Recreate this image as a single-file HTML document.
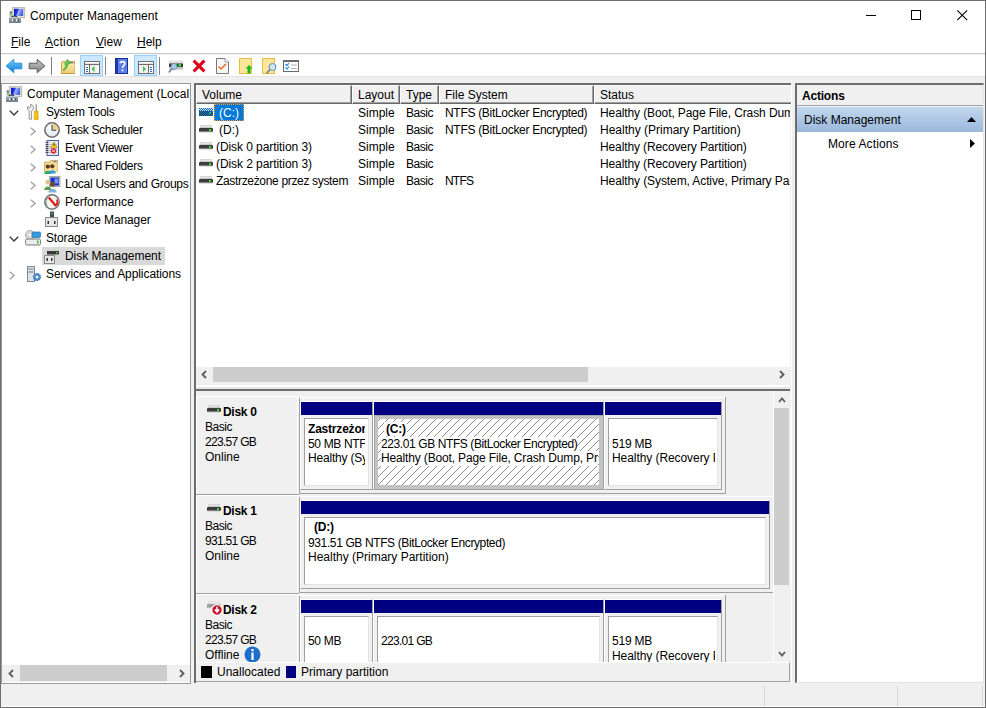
<!DOCTYPE html>
<html><head><meta charset="utf-8">
<style>
*{box-sizing:border-box;margin:0;padding:0}
html,body{width:986px;height:708px;overflow:hidden;background:#f0f0f0;font-family:"Liberation Sans",sans-serif;font-size:12px;color:#000}
.a{position:absolute}
.t{position:absolute;white-space:nowrap;line-height:14px;font-size:12px}
.b{font-weight:bold}
svg{position:absolute;overflow:visible}
.hd{position:absolute;top:85px;height:19px;background:#f0f0f0;border-top:1px solid #fff;border-left:1px solid #fff;box-shadow:inset -1px -1px 0 #a0a0a0;border-right:1px solid #696969;border-bottom:1px solid #696969}
.sb{position:absolute;background:#f0f0f0}
.th{position:absolute;background:#cdcdcd}
.bar{position:absolute;background:#000080;height:13px}
.cell{position:absolute;background:#f0f0f0;border-right:1px solid #a0a0a0;border-bottom:1px solid #a0a0a0}
.in{position:absolute;background:#fff;border-top:1px solid #a0a0a0;border-left:1px solid #a0a0a0;border-right:1px solid #e3e3e3;border-bottom:1px solid #e3e3e3;overflow:hidden}
.lab{position:absolute;left:196px;width:103px;height:98px;background:#f0f0f0;border-top:1px solid #fff;border-left:1px solid #fff;border-bottom:1px solid #a0a0a0}
.sep{position:absolute;background:#a0a0a0}
</style></head><body>
<!-- window frame -->
<div class="a" style="left:0;top:0;width:986px;height:708px;border:1px solid #6e6e6e"></div>
<div class="a" style="left:1px;top:1px;width:984px;height:76px;background:#fff"></div>
<!-- title -->
<svg style="left:9px;top:7px" width="16" height="16" viewBox="0 0 16 16">
 <defs><linearGradient id="scra" x1="0" y1="0" x2="1" y2="0.3"><stop offset="0" stop-color="#0008c8"/><stop offset="0.45" stop-color="#2a40e8"/><stop offset="0.55" stop-color="#a8b8f8"/><stop offset="1" stop-color="#4060e8"/></linearGradient>
 <linearGradient id="bsa" x1="0" y1="0" x2="0" y2="1"><stop offset="0" stop-color="#a8b4bc"/><stop offset="1" stop-color="#6e7c86"/></linearGradient></defs>
 <rect x="3.6" y="0.6" width="12" height="10" fill="#e8e6da" stroke="#c4c0ae" stroke-width="1.2"/>
 <rect x="5" y="1.8" width="9.2" height="7.2" fill="url(#scra)"/>
 <rect x="0.4" y="3.8" width="3" height="6.5" fill="#c8c8c8"/>
 <rect x="1.2" y="4.6" width="1.4" height="2" fill="#505050"/>
 <rect x="0.9" y="6.8" width="2" height="1.6" fill="#50e050"/>
 <path d="M2.5 10.5C3.5 8.5 7 8.5 8.5 10.5" stroke="#202020" stroke-width="1.2" fill="none"/>
 <rect x="0" y="10" width="12" height="6" fill="url(#bsa)"/>
 <rect x="0" y="10" width="12" height="1" fill="#c0cad0"/>
 <rect x="3" y="12.2" width="1.6" height="2" fill="#fff"/><rect x="7" y="12.2" width="1.6" height="2" fill="#fff"/>
 <rect x="4.6" y="12.2" width="1" height="2" fill="#2a3a44"/><rect x="8.6" y="12.2" width="1" height="2" fill="#2a3a44"/>
</svg>
<div class="t" style="left:30px;top:9px;letter-spacing:0.1px">Computer Management</div>
<!-- window controls -->
<div class="a" style="left:866px;top:15px;width:10px;height:1px;background:#000"></div>
<div class="a" style="left:911px;top:10px;width:10px;height:10px;border:1px solid #000"></div>
<svg style="left:957px;top:10px" width="11" height="11"><path d="M0.3 0.3L10.2 10.2M10.2 0.3L0.3 10.2" stroke="#000" stroke-width="1.1"/></svg>
<!-- menu -->
<div class="t" style="left:11px;top:35px"><u>F</u>ile</div>
<div class="t" style="left:45px;top:35px;letter-spacing:0.25px"><u>A</u>ction</div>
<div class="t" style="left:96px;top:35px"><u>V</u>iew</div>
<div class="t" style="left:137px;top:35px"><u>H</u>elp</div>
<div class="a" style="left:1px;top:53px;width:984px;height:1px;background:#c8c8c8"></div>
<!-- TOOLBAR -->

<div class="a" style="left:1px;top:54px;width:984px;height:1px;background:#f3f6fb"></div>
<div class="a" style="left:1px;top:76px;width:984px;height:1px;background:#e3e3e3"></div>
<svg style="left:5px;top:58px" width="18" height="16" viewBox="0 0 18 16">
 <defs><linearGradient id="gb" x1="0" y1="0" x2="0" y2="1"><stop offset="0" stop-color="#6fd0ff"/><stop offset="1" stop-color="#0a7ad8"/></linearGradient></defs>
 <path d="M1.2 8L8.8 1.2V5.2H16.8V10.8H8.8V14.8Z" fill="url(#gb)" stroke="#2f8fdc" stroke-width="1"/>
</svg>
<svg style="left:28px;top:58px" width="18" height="16" viewBox="0 0 18 16">
 <defs><linearGradient id="gg" x1="0" y1="0" x2="0" y2="1"><stop offset="0" stop-color="#c8c8c8"/><stop offset="1" stop-color="#808080"/></linearGradient></defs>
 <path d="M16.8 8L9.2 1.2V5.2H1.2V10.8H9.2V14.8Z" fill="url(#gg)" stroke="#5a5a5a" stroke-width="1"/>
</svg>
<div class="a" style="left:51px;top:57px;width:1px;height:18px;background:#808080"></div>
<svg style="left:61px;top:58px" width="15" height="16" viewBox="0 0 15 16">
 <defs><linearGradient id="fo" x1="0" y1="0" x2="0" y2="1"><stop offset="0" stop-color="#fbe7a4"/><stop offset="1" stop-color="#efcf77"/></linearGradient></defs>
 <path d="M0.5 4.5Q0.5 3.5 1.5 3.5H13.5V15.5H0.5Z" fill="#f3d98e" stroke="#cfa646" stroke-width="1"/>
 <rect x="1" y="6" width="12.5" height="9" fill="url(#fo)"/>
 <path d="M0.5 15.5H13.5" stroke="#c99a3a"/>
 <rect x="9" y="4" width="3" height="1.3" fill="#4a8ae0"/>
 <path d="M2 12C3.5 10.5 4.5 8.5 5 6.5L3.5 6.2L6.5 1.2L9.2 5.5L7.2 5.8C6.8 8.8 5 11.2 3 12.6Z" fill="#5ad04a" stroke="#3a9a30" stroke-width="0.6"/>
</svg>
<div class="a" style="left:80px;top:55px;width:23px;height:21px;background:#cce8ff;border:1px solid #99d1ff"></div>
<svg style="left:84px;top:61px" width="16" height="13" viewBox="0 0 16 13" shape-rendering="crispEdges">
 <rect x="0" y="0" width="16" height="13" fill="#6e6e6e"/>
 <rect x="1" y="1" width="14" height="2" fill="#e6e6e6"/>
 <rect x="1" y="1" width="10" height="1" fill="#fff"/><rect x="12" y="1" width="1" height="1" fill="#fff"/><rect x="14" y="1" width="1" height="1" fill="#fff"/>
 <rect x="1" y="4" width="4" height="8" fill="#fff"/>
 <rect x="6" y="4" width="9" height="8" fill="#f2f2f2"/>
 <rect x="13" y="4" width="2" height="8" fill="#fbfbfb"/>
 <rect x="2" y="6" width="2" height="1" fill="#2e6ad0"/><rect x="2" y="8" width="2" height="1" fill="#2e6ad0"/><rect x="2" y="10" width="2" height="1" fill="#2e6ad0"/>
 <path d="M7.5 8L10.5 5V11Z" fill="#3ec03e" shape-rendering="auto"/>
</svg>
<div class="a" style="left:105px;top:57px;width:1px;height:18px;background:#808080"></div>
<svg style="left:115px;top:58px" width="13" height="16" viewBox="0 0 13 16">
 <rect x="0" y="0" width="13" height="16" fill="#3a5ed8"/>
 <rect x="0" y="0" width="3" height="16" fill="#1d3aa8"/>
 <rect x="3" y="0.5" width="9.5" height="15" fill="#5b7fe6"/>
 <rect x="0.5" y="0.5" width="12" height="15" fill="none" stroke="#1c2f90"/>
 <path d="M5.2 5.2C5.2 3 9.8 3 9.8 5.5C9.8 7.5 7.5 7.5 7.5 10" stroke="#fff" stroke-width="1.6" fill="none"/>
 <rect x="6.7" y="11.5" width="1.7" height="1.7" fill="#fff"/>
</svg>
<div class="a" style="left:134px;top:55px;width:23px;height:21px;background:#cce8ff;border:1px solid #99d1ff"></div>
<svg style="left:138px;top:61px" width="16" height="13" viewBox="0 0 16 13" shape-rendering="crispEdges">
 <rect x="0" y="0" width="16" height="13" fill="#6e6e6e"/>
 <rect x="1" y="1" width="14" height="2" fill="#e6e6e6"/>
 <rect x="1" y="1" width="10" height="1" fill="#fff"/><rect x="12" y="1" width="1" height="1" fill="#fff"/><rect x="14" y="1" width="1" height="1" fill="#fff"/>
 <rect x="1" y="4" width="9" height="8" fill="#f2f2f2"/>
 <rect x="11" y="4" width="4" height="8" fill="#fff"/>
 <rect x="12" y="6" width="2" height="1" fill="#2e6ad0"/><rect x="12" y="8" width="2" height="1" fill="#2e6ad0"/><rect x="12" y="10" width="2" height="1" fill="#2e6ad0"/>
 <path d="M8 8L5 5V11Z" fill="#3ec03e" shape-rendering="auto"/>
</svg>
<div class="a" style="left:159px;top:57px;width:1px;height:18px;background:#808080"></div>
<svg style="left:168px;top:60px" width="16" height="14" viewBox="0 0 16 14">
 <defs><linearGradient id="dr" x1="0" y1="0" x2="0" y2="1"><stop offset="0" stop-color="#e6e6e6"/><stop offset="1" stop-color="#bdbdbd"/></linearGradient></defs>
 <rect x="1" y="0.5" width="14" height="9" fill="url(#dr)"/>
 <rect x="1" y="3.5" width="14" height="3.5" fill="#3c3c3c"/>
 <rect x="10.5" y="4" width="2.5" height="2.5" fill="#2ee52e"/>
 <circle cx="6" cy="6.5" r="3" fill="#a8c8e4" stroke="#7090b0" stroke-width="0.9"/>
 <path d="M4 8.7L0.8 12.5" stroke="#6a7a88" stroke-width="1.4"/>
</svg>
<svg style="left:192px;top:59px" width="14" height="14" viewBox="0 0 14 14">
 <path d="M1.6 1.6L12.4 12.4M12.4 1.6L1.6 12.4" stroke="#e0001a" stroke-width="3.1"/>
</svg>
<svg style="left:216px;top:58px" width="13" height="16" viewBox="0 0 13 16">
 <path d="M0.5 0.5H9L12.5 4V15.5H0.5Z" fill="#f6f6f6" stroke="#7a7a7a"/>
 <path d="M9 0.5V4H12.5" fill="#fff" stroke="#9a9a9a"/>
 <path d="M2.5 8.5L5 11L10 6" stroke="#f26a1b" stroke-width="1.5" fill="none"/>
</svg>
<svg style="left:239px;top:58px" width="14" height="16" viewBox="0 0 14 16">
 <rect x="0.5" y="0.5" width="12" height="15" fill="#fde59b" stroke="#e8c040"/>
 <path d="M10 7L13.5 10.5H11.5V15.5H8.5V10.5H6.5Z" fill="#18b818"/>
</svg>
<svg style="left:262px;top:58px" width="15" height="16" viewBox="0 0 15 16">
 <rect x="0.5" y="0.5" width="12" height="15" fill="#fde59b" stroke="#e8c040"/>
 <circle cx="10.5" cy="9" r="3.5" fill="#cde4f4" stroke="#6d8aa0" stroke-width="1"/>
 <path d="M8 11.5L4.5 15.5" stroke="#6d7a88" stroke-width="1.5"/>
</svg>
<svg style="left:283px;top:60px" width="16" height="12" viewBox="0 0 16 12">
 <rect x="0.5" y="0.5" width="15" height="11" fill="#fff" stroke="#6a6a6a"/>
 <rect x="1" y="1" width="14" height="1" fill="#6a6a6a"/>
 <path d="M2.5 4L4 5.5L6 3M2.5 7.5L4 9L6 6.5" stroke="#2a8ae8" stroke-width="1.2" fill="none"/>
 <path d="M8 5H14M8 8.5H14" stroke="#b0b0b0" stroke-width="1"/>
</svg>


<!-- left tree panel -->
<div class="a" style="left:1px;top:83px;width:190px;height:601px;background:#fff;border:1px solid #929ca6"></div>
<div class="a" style="left:42px;top:247px;width:123px;height:18px;background:#d9d9d9"></div>
<div class="a" style="left:2px;top:84px;width:188px;height:580px;overflow:hidden">
<div class="t" style="left:25px;top:3px">Computer Management (Local</div>
<div class="t" style="left:44px;top:21px;letter-spacing:-0.21px">System Tools</div>
<div class="t" style="left:63px;top:39px;letter-spacing:-0.32px">Task Scheduler</div>
<div class="t" style="left:63px;top:57px;letter-spacing:-0.23px">Event Viewer</div>
<div class="t" style="left:63px;top:75px;letter-spacing:-0.32px">Shared Folders</div>
<div class="t" style="left:63px;top:93px;letter-spacing:-0.27px">Local Users and Groups</div>
<div class="t" style="left:63px;top:111px">Performance</div>
<div class="t" style="left:63px;top:129px;letter-spacing:-0.13px">Device Manager</div>
<div class="t" style="left:44px;top:147px;letter-spacing:-0.14px">Storage</div>
<div class="t" style="left:63px;top:165px;letter-spacing:-0.05px">Disk Management</div>
<div class="t" style="left:44px;top:183px;letter-spacing:-0.07px">Services and Applications</div>
</div>
<svg style="left:9px;top:110px" width="10" height="6" viewBox="0 0 10 6"><path d="M0.8 0.8L5 5L9.2 0.8" stroke="#404040" stroke-width="1.5" fill="none"/></svg>
<svg style="left:9px;top:236px" width="10" height="6" viewBox="0 0 10 6"><path d="M0.8 0.8L5 5L9.2 0.8" stroke="#404040" stroke-width="1.5" fill="none"/></svg>
<svg style="left:30px;top:127px" width="6" height="9" viewBox="0 0 6 9"><path d="M0.8 0.8L5 4.5L0.8 8.2" stroke="#a6a6a6" stroke-width="1.5" fill="none"/></svg>
<svg style="left:30px;top:145px" width="6" height="9" viewBox="0 0 6 9"><path d="M0.8 0.8L5 4.5L0.8 8.2" stroke="#a6a6a6" stroke-width="1.5" fill="none"/></svg>
<svg style="left:30px;top:163px" width="6" height="9" viewBox="0 0 6 9"><path d="M0.8 0.8L5 4.5L0.8 8.2" stroke="#a6a6a6" stroke-width="1.5" fill="none"/></svg>
<svg style="left:30px;top:181px" width="6" height="9" viewBox="0 0 6 9"><path d="M0.8 0.8L5 4.5L0.8 8.2" stroke="#a6a6a6" stroke-width="1.5" fill="none"/></svg>
<svg style="left:30px;top:199px" width="6" height="9" viewBox="0 0 6 9"><path d="M0.8 0.8L5 4.5L0.8 8.2" stroke="#a6a6a6" stroke-width="1.5" fill="none"/></svg>
<svg style="left:9px;top:271px" width="6" height="9" viewBox="0 0 6 9"><path d="M0.8 0.8L5 4.5L0.8 8.2" stroke="#a6a6a6" stroke-width="1.5" fill="none"/></svg>
<svg style="left:6px;top:86px" width="16" height="16" viewBox="0 0 16 16">
 <defs><linearGradient id="scrb" x1="0" y1="0" x2="1" y2="0.3"><stop offset="0" stop-color="#0008c8"/><stop offset="0.45" stop-color="#2a40e8"/><stop offset="0.55" stop-color="#a8b8f8"/><stop offset="1" stop-color="#4060e8"/></linearGradient>
 <linearGradient id="bsb" x1="0" y1="0" x2="0" y2="1"><stop offset="0" stop-color="#a8b4bc"/><stop offset="1" stop-color="#6e7c86"/></linearGradient></defs>
 <rect x="3.6" y="0.6" width="12" height="10" fill="#e8e6da" stroke="#c4c0ae" stroke-width="1.2"/>
 <rect x="5" y="1.8" width="9.2" height="7.2" fill="url(#scrb)"/>
 <rect x="0.4" y="3.8" width="3" height="6.5" fill="#c8c8c8"/>
 <rect x="1.2" y="4.6" width="1.4" height="2" fill="#505050"/>
 <rect x="0.9" y="6.8" width="2" height="1.6" fill="#50e050"/>
 <path d="M2.5 10.5C3.5 8.5 7 8.5 8.5 10.5" stroke="#202020" stroke-width="1.2" fill="none"/>
 <rect x="0" y="10" width="12" height="6" fill="url(#bsb)"/>
 <rect x="0" y="10" width="12" height="1" fill="#c0cad0"/>
 <rect x="3" y="12.2" width="1.6" height="2" fill="#fff"/><rect x="7" y="12.2" width="1.6" height="2" fill="#fff"/>
 <rect x="4.6" y="12.2" width="1" height="2" fill="#2a3a44"/><rect x="8.6" y="12.2" width="1" height="2" fill="#2a3a44"/>
</svg>
<svg style="left:27px;top:104px" width="12" height="16" viewBox="0 0 12 16">
 <path d="M2.2 15.2V6.8C0.6 6 0.2 4.5 0.6 2.6L2.3 3.8L3.8 2.8L3.6 0.4C5.6 0.8 6.8 2.2 6.5 4.3C6.3 5.5 5.5 6.4 4.6 6.8V15.2Z" fill="#f2f2f2" stroke="#8a8a8a" stroke-width="0.9" stroke-linejoin="round"/>
 <rect x="8.6" y="0.3" width="1.2" height="7.5" fill="#8c8c8c"/>
 <path d="M7.2 7.2H11.2V9.2L10.5 10.2L11.2 11.2V15.6H7.2V11.2L7.9 10.2L7.2 9.2Z" fill="#f5c20c" stroke="#d09a00" stroke-width="0.6"/>
</svg>
<svg style="left:44px;top:122px" width="16" height="16" viewBox="0 0 16 16">
 <defs><radialGradient id="cf" cx="0.4" cy="0.4" r="0.7"><stop offset="0" stop-color="#ffffff"/><stop offset="1" stop-color="#d6e0ec"/></radialGradient></defs>
 <circle cx="8" cy="8" r="7.2" fill="url(#cf)" stroke="#6a6a6a" stroke-width="1.5"/>
 <path d="M8 8V1.6A6.4 6.4 0 0 1 14.4 8Z" fill="#efd08a"/>
 <path d="M8 3V8.2H12" stroke="#3a4a5a" stroke-width="1.1" fill="none"/>
</svg>
<svg style="left:45px;top:140px" width="14" height="16" viewBox="0 0 14 16">
 <rect x="2" y="0.5" width="11.5" height="15" fill="#e4ebf6" stroke="#4a62a8"/>
 <path d="M4 4.5h8M4 6.5h8M4 8.5h8M4 10.5h8M4 12.5h8" stroke="#9fb2d6" stroke-width="0.8"/>
 <path d="M0.5 2.5h3M0.5 4.5h3M0.5 6.5h3M0.5 8.5h3M0.5 10.5h3M0.5 12.5h3" stroke="#3a3a3a" stroke-width="0.9"/>
 <path d="M9 1.8L12.3 7.6H5.7Z" fill="#f7c800" stroke="#b08a00" stroke-width="0.5"/>
 <rect x="8.6" y="3.6" width="0.9" height="2.2" fill="#222"/>
 <circle cx="8.5" cy="11" r="2.7" fill="#e2202e"/>
 <path d="M7.4 9.9L9.6 12.1M9.6 9.9L7.4 12.1" stroke="#fff" stroke-width="0.9"/>
</svg>
<svg style="left:44px;top:159px" width="16" height="16" viewBox="0 0 16 16">
 <path d="M0.5 3H5.5L6.5 1.5H13.5V12.5H0.5Z" fill="#f3d68c" stroke="#c9a44a" stroke-width="0.8"/>
 <rect x="1" y="5" width="12.5" height="7.5" fill="#f7de9c"/>
 <rect x="9.5" y="2" width="3" height="1" fill="#3a78d8"/>
 <circle cx="3.8" cy="7.6" r="2.1" fill="#5a3a22"/><path d="M0.3 15C0.3 10.6 7.3 10.6 7.3 15Z" fill="#2eaa5c"/>
 <circle cx="8.3" cy="7.3" r="2.1" fill="#5a3a22"/><path d="M4.8 14.5C4.8 10.3 11.8 10.3 11.8 14.5Z" fill="#2f9fd6"/>
</svg>
<svg style="left:44px;top:176px" width="17" height="17" viewBox="0 0 17 17">
 <rect x="5.5" y="0.5" width="10.5" height="10" fill="#d4d4cc" stroke="#a8a8a0"/>
 <rect x="6.5" y="1.5" width="8.5" height="8" fill="#1430d0"/><rect x="10.5" y="2.5" width="4" height="5" fill="#7894ee"/>
 <circle cx="3.8" cy="6.2" r="2.4" fill="#d8c488"/><path d="M0.2 14C0.2 9.2 7.4 9.2 7.4 14Z" fill="#5aa04a"/>
 <circle cx="8.5" cy="8.2" r="2.5" fill="#6e4a2a"/><path d="M4.3 16.5C4.3 11.5 12.7 11.5 12.7 16.5Z" fill="#86acd8"/>
</svg>
<svg style="left:44px;top:194px" width="16" height="16" viewBox="0 0 16 16">
 <circle cx="8" cy="8" r="7.2" fill="#f6f4ee" stroke="#707070" stroke-width="1.5"/>
 <path d="M3.2 11.5A5.4 5.4 0 0 1 5.5 3.2" stroke="#3a8a6a" stroke-width="1.2" fill="none" stroke-dasharray="0.9 0.9"/>
 <path d="M12.8 5.5A5.4 5.4 0 0 1 11 12" stroke="#d81010" stroke-width="1.6" fill="none"/>
 <path d="M4.8 3.5L11.5 11.5" stroke="#e21010" stroke-width="2"/>
</svg>
<svg style="left:45px;top:211px" width="13" height="16" viewBox="0 0 13 16">
 <rect x="5" y="0.5" width="4" height="6" fill="#4a4a4a"/><rect x="6.5" y="2" width="1.3" height="1.3" fill="#3ee03e"/>
 <rect x="0.5" y="6.5" width="12" height="9" fill="#e6e6e6" stroke="#8a8a8a"/>
 <rect x="2.5" y="10" width="1.5" height="3" fill="#333"/><rect x="9" y="10" width="1.5" height="3" fill="#333"/>
</svg>
<svg style="left:25px;top:230px" width="16" height="16" viewBox="0 0 16 16">
 <circle cx="5" cy="5" r="4.5" fill="#d8d8d8" stroke="#9a9a9a" stroke-width="0.8"/><circle cx="5" cy="5" r="1.2" fill="#fff"/>
 <rect x="7" y="2" width="8.5" height="5.5" rx="1" fill="#3a9ae0" stroke="#2070b0" stroke-width="0.7"/>
 <rect x="0.5" y="9" width="15" height="6" rx="1.5" fill="#ececec" stroke="#7a7a7a"/>
 <rect x="12" y="10.5" width="1.5" height="3" fill="#2ec02e"/>
</svg>
<svg style="left:44px;top:248px" width="16" height="16" viewBox="0 0 16 16">
 <rect x="3" y="1" width="12" height="3" fill="#d6d6d6"/><rect x="3" y="3" width="12" height="3.5" fill="#383838"/>
 <rect x="12" y="4" width="1.5" height="1.5" fill="#3ee03e"/>
 <rect x="0.5" y="7.5" width="10" height="8" fill="#e6e6e6" stroke="#8a8a8a"/>
 <rect x="2.5" y="10" width="1.5" height="3" fill="#333"/><rect x="7" y="10" width="1.5" height="3" fill="#333"/>
</svg>
<svg style="left:27px;top:266px" width="15" height="16" viewBox="0 0 15 16">
 <rect x="0.5" y="0.5" width="7" height="15" fill="#dde3e8" stroke="#7d8a96"/>
 <path d="M1.5 3h5M1.5 6h5" stroke="#6a7a88" stroke-width="1"/>
 <circle cx="10" cy="11" r="3.5" fill="#5a90d0" stroke="#3a70b0" stroke-width="1.2" stroke-dasharray="1.3 0.8"/>
 <circle cx="10" cy="11" r="1.3" fill="#fff"/>
</svg>

<div class="sb" style="left:2px;top:665px;width:188px;height:17px"></div>
<div class="th" style="left:20px;top:665px;width:147px;height:16px"></div>
<svg style="left:8px;top:669px" width="6" height="9" viewBox="0 0 6 9"><path d="M5 1L1.5 4.5L5 8" stroke="#606060" stroke-width="1.9" fill="none"/></svg>
<svg style="left:179px;top:669px" width="6" height="9" viewBox="0 0 6 9"><path d="M1 1L4.5 4.5L1 8" stroke="#606060" stroke-width="1.9" fill="none"/></svg>
<!-- center panel -->
<div class="a" style="left:194px;top:83px;width:597px;height:600px;border-top:2px solid #6d6d6d;border-left:2px solid #6d6d6d;background:#f0f0f0"></div>
<div class="a" style="left:196px;top:85px;width:594px;height:300px;background:#fff"></div>
<div class="hd" style="left:196px;width:156px"></div>
<div class="t" style="left:202px;top:88px">Volume</div>
<div class="hd" style="left:352px;width:48px"></div>
<div class="t" style="left:358px;top:88px">Layout</div>
<div class="hd" style="left:400px;width:39px"></div>
<div class="t" style="left:406px;top:88px">Type</div>
<div class="hd" style="left:439px;width:155px"></div>
<div class="t" style="left:445px;top:88px">File System</div>
<div class="hd" style="left:594px;width:197px;border-right:none;box-shadow:inset 0 -1px 0 #a0a0a0"></div>
<div class="t" style="left:600px;top:88px">Status</div>
<div class="a" style="left:214px;top:104px;width:30px;height:17px;background:#0078d7;outline:1px dotted #ff9a3c;outline-offset:-1px"></div>
<svg style="left:199px;top:108px" width="14" height="8" viewBox="0 0 14 8">
<defs><pattern id="dith" width="2" height="2" patternUnits="userSpaceOnUse"><rect width="1" height="1" fill="#0078d7"/><rect x="1" y="1" width="1" height="1" fill="#0078d7"/></pattern></defs>
<rect x="0.5" y="0" width="13" height="3" fill="#d4d4d4"/><rect x="0" y="3" width="14" height="5" fill="#3a3a3a"/><rect x="10" y="4" width="2" height="2" fill="#2fdc2f"/>
<rect x="0" y="0" width="14" height="8" fill="url(#dith)"/></svg>
<svg style="left:199px;top:125px" width="14" height="8" viewBox="0 0 14 8"><rect x="1" y="0" width="12" height="3.5" rx="1" fill="#c6c6c6"/><rect x="1.5" y="0.5" width="11" height="1.5" fill="#e6e6e6"/><rect x="0" y="3" width="14" height="4" rx="1" fill="#3c3c3c"/><rect x="1" y="6.5" width="12" height="1" fill="#c4c4c4"/><rect x="10" y="4" width="2" height="2" fill="#2fdc2f"/></svg>
<svg style="left:199px;top:142px" width="14" height="8" viewBox="0 0 14 8"><rect x="1" y="0" width="12" height="3.5" rx="1" fill="#c6c6c6"/><rect x="1.5" y="0.5" width="11" height="1.5" fill="#e6e6e6"/><rect x="0" y="3" width="14" height="4" rx="1" fill="#3c3c3c"/><rect x="1" y="6.5" width="12" height="1" fill="#c4c4c4"/><rect x="10" y="4" width="2" height="2" fill="#2fdc2f"/></svg>
<svg style="left:199px;top:159px" width="14" height="8" viewBox="0 0 14 8"><rect x="1" y="0" width="12" height="3.5" rx="1" fill="#c6c6c6"/><rect x="1.5" y="0.5" width="11" height="1.5" fill="#e6e6e6"/><rect x="0" y="3" width="14" height="4" rx="1" fill="#3c3c3c"/><rect x="1" y="6.5" width="12" height="1" fill="#c4c4c4"/><rect x="10" y="4" width="2" height="2" fill="#2fdc2f"/></svg>
<svg style="left:199px;top:176px" width="14" height="8" viewBox="0 0 14 8"><rect x="1" y="0" width="12" height="3.5" rx="1" fill="#c6c6c6"/><rect x="1.5" y="0.5" width="11" height="1.5" fill="#e6e6e6"/><rect x="0" y="3" width="14" height="4" rx="1" fill="#3c3c3c"/><rect x="1" y="6.5" width="12" height="1" fill="#c4c4c4"/><rect x="10" y="4" width="2" height="2" fill="#2fdc2f"/></svg>
<div class="t" style="left:219px;top:106px;color:#fff">(C:)</div>
<div class="t" style="left:358px;top:106px">Simple</div>
<div class="t" style="left:406px;top:106px;letter-spacing:-0.46px">Basic</div>
<div class="t" style="left:445px;top:106px;letter-spacing:-0.3px">NTFS (BitLocker Encrypted)</div>
<div class="a" style="left:600px;top:106px;width:190px;height:16px;overflow:hidden"><div class="t" style="left:0;top:0;letter-spacing:-0.1px">Healthy (Boot, Page File, Crash Dump, Primary Partition)</div></div>
<div class="t" style="left:219px;top:123px">(D:)</div>
<div class="t" style="left:358px;top:123px">Simple</div>
<div class="t" style="left:406px;top:123px;letter-spacing:-0.46px">Basic</div>
<div class="t" style="left:445px;top:123px;letter-spacing:-0.3px">NTFS (BitLocker Encrypted)</div>
<div class="a" style="left:600px;top:123px;width:190px;height:16px;overflow:hidden"><div class="t" style="left:0;top:0">Healthy (Primary Partition)</div></div>
<div class="t" style="left:216px;top:140px;letter-spacing:-0.07px">(Disk 0 partition 3)</div>
<div class="t" style="left:358px;top:140px">Simple</div>
<div class="t" style="left:406px;top:140px;letter-spacing:-0.46px">Basic</div>
<div class="a" style="left:600px;top:140px;width:190px;height:16px;overflow:hidden"><div class="t" style="left:0;top:0;letter-spacing:-0.12px">Healthy (Recovery Partition)</div></div>
<div class="t" style="left:216px;top:157px;letter-spacing:-0.07px">(Disk 2 partition 3)</div>
<div class="t" style="left:358px;top:157px">Simple</div>
<div class="t" style="left:406px;top:157px;letter-spacing:-0.46px">Basic</div>
<div class="a" style="left:600px;top:157px;width:190px;height:16px;overflow:hidden"><div class="t" style="left:0;top:0;letter-spacing:-0.12px">Healthy (Recovery Partition)</div></div>
<div class="t" style="left:216px;top:174px;letter-spacing:-0.33px">Zastrzeżone przez system</div>
<div class="t" style="left:358px;top:174px">Simple</div>
<div class="t" style="left:406px;top:174px;letter-spacing:-0.46px">Basic</div>
<div class="t" style="left:445px;top:174px;letter-spacing:-0.8px">NTFS</div>
<div class="a" style="left:600px;top:174px;width:190px;height:16px;overflow:hidden"><div class="t" style="left:0;top:0;letter-spacing:-0.1px">Healthy (System, Active, Primary Partition)</div></div>
<div class="sb" style="left:196px;top:367px;width:594px;height:18px"></div>
<div class="th" style="left:213px;top:367px;width:375px;height:15px"></div>
<svg style="left:201px;top:370px" width="6" height="9" viewBox="0 0 6 9"><path d="M5 1L1.5 4.5L5 8" stroke="#606060" stroke-width="1.9" fill="none"/></svg>
<svg style="left:779px;top:370px" width="6" height="9" viewBox="0 0 6 9"><path d="M1 1L4.5 4.5L1 8" stroke="#606060" stroke-width="1.9" fill="none"/></svg>
<div class="a" style="left:196px;top:385px;width:594px;height:1px;background:#fff"></div>
<div class="a" style="left:196px;top:386px;width:594px;height:3px;background:#e6e6e6;border-top:1px solid #fff"></div>
<div class="a" style="left:196px;top:389px;width:594px;height:2px;background:#6d6d6d"></div>
<div class="a" style="left:196px;top:391px;width:578px;height:271px;background:#f0f0f0;overflow:hidden">
<div class="a" style="left:0px;top:5px;width:102px;height:98px;background:#f0f0f0;border-top:1px solid #fff;border-left:1px solid #fff;border-right:1px solid #fff"></div>
<div class="a" style="left:0px;top:103px;width:103px;height:1px;background:#a0a0a0"></div>
<div class="a" style="left:0px;top:104px;width:103px;height:1px;background:#fff"></div>
<svg style="left:11px;top:14px" width="14" height="8" viewBox="0 0 14 8"><g><rect x="1" y="0" width="12" height="3.5" rx="1" fill="#c6c6c6"/><rect x="1.5" y="0.5" width="11" height="1.5" fill="#e6e6e6"/><rect x="0" y="3" width="14" height="4" rx="1" fill="#3c3c3c"/><rect x="1" y="6.5" width="12" height="1" fill="#c4c4c4"/><rect x="10" y="4" width="2" height="2" fill="#2fdc2f"/></g></svg>
<div class="t" style="left:27px;top:14px;letter-spacing:-0.3px;font-weight:bold">Disk 0</div>
<div class="t" style="left:9px;top:29px;letter-spacing:-0.46px">Basic</div>
<div class="t" style="left:9px;top:44px;letter-spacing:-0.7px">223.57 GB</div>
<div class="t" style="left:9px;top:59px">Online</div>
<div class="a" style="left:0px;top:104px;width:102px;height:98px;background:#f0f0f0;border-top:1px solid #fff;border-left:1px solid #fff;border-right:1px solid #fff"></div>
<div class="a" style="left:0px;top:202px;width:103px;height:1px;background:#a0a0a0"></div>
<div class="a" style="left:0px;top:203px;width:103px;height:1px;background:#fff"></div>
<svg style="left:11px;top:113px" width="14" height="8" viewBox="0 0 14 8"><g><rect x="1" y="0" width="12" height="3.5" rx="1" fill="#c6c6c6"/><rect x="1.5" y="0.5" width="11" height="1.5" fill="#e6e6e6"/><rect x="0" y="3" width="14" height="4" rx="1" fill="#3c3c3c"/><rect x="1" y="6.5" width="12" height="1" fill="#c4c4c4"/><rect x="10" y="4" width="2" height="2" fill="#2fdc2f"/></g></svg>
<div class="t" style="left:27px;top:113px;letter-spacing:-0.3px;font-weight:bold">Disk 1</div>
<div class="t" style="left:9px;top:128px;letter-spacing:-0.46px">Basic</div>
<div class="t" style="left:9px;top:143px;letter-spacing:-0.7px">931.51 GB</div>
<div class="t" style="left:9px;top:158px">Online</div>
<div class="a" style="left:0px;top:203px;width:102px;height:98px;background:#f0f0f0;border-top:1px solid #fff;border-left:1px solid #fff;border-right:1px solid #fff"></div>
<div class="a" style="left:0px;top:301px;width:103px;height:1px;background:#a0a0a0"></div>
<div class="a" style="left:0px;top:302px;width:103px;height:1px;background:#fff"></div>
<svg style="left:11px;top:210px" width="14" height="8" viewBox="0 0 14 8"><g opacity="0.45"><rect x="1" y="0" width="12" height="3.5" rx="1" fill="#c6c6c6"/><rect x="1.5" y="0.5" width="11" height="1.5" fill="#e6e6e6"/><rect x="0" y="3" width="14" height="4" rx="1" fill="#3c3c3c"/><rect x="1" y="6.5" width="12" height="1" fill="#c4c4c4"/><rect x="10" y="4" width="2" height="2" fill="#2fdc2f"/></g></svg>
<svg style="left:15px;top:213px" width="12" height="12" viewBox="0 0 12 12"><circle cx="6" cy="6" r="5.3" fill="#c8102e" stroke="#fff" stroke-width="1.2"/><path d="M6 2.8V7.5M3.8 5.5L6 8L8.2 5.5" stroke="#fff" stroke-width="1.6" fill="none"/></svg>
<div class="t" style="left:27px;top:212px;letter-spacing:-0.3px;font-weight:bold">Disk 2</div>
<div class="t" style="left:9px;top:227px;letter-spacing:-0.46px">Basic</div>
<div class="t" style="left:9px;top:242px;letter-spacing:-0.7px">223.57 GB</div>
<div class="t" style="left:9px;top:257px">Offline</div>
<svg style="left:48px;top:255px" width="17" height="17" viewBox="0 0 17 17"><circle cx="8.5" cy="8.5" r="8" fill="#1e6fc8"/><rect x="7.4" y="3" width="2.2" height="2.2" fill="#fff"/><rect x="7.4" y="6.5" width="2.2" height="7.5" fill="#fff"/></svg>
<div class="a" style="left:103px;top:7px;width:1px;height:96px;background:#a0a0a0"></div>
<div class="a" style="left:104px;top:6px;width:425px;height:1px;background:#fff"></div>
<div class="a" style="left:529px;top:6px;width:1px;height:97px;background:#a0a0a0"></div>
<div class="a" style="left:103px;top:102px;width:427px;height:1px;background:#a0a0a0"></div>
<div class="a" style="left:104px;top:10px;width:73px;height:89px;background:#f0f0f0;border-left:1px solid #fff;border-top:1px solid #fff;border-right:1px solid #a0a0a0;border-bottom:1px solid #a0a0a0"></div>
<div class="a" style="left:105px;top:11px;width:71px;height:13px;background:#000080"></div>
<div class="a" style="left:108px;top:27px;width:65px;height:68px;background:#fff;border-left:1px solid #a0a0a0;border-top:1px solid #a0a0a0;border-right:1px solid #e3e3e3;border-bottom:1px solid #e3e3e3"></div>
<div class="a" style="left:177px;top:10px;width:231px;height:89px;background:#f0f0f0;border-left:1px solid #fff;border-top:1px solid #fff;border-right:1px solid #a0a0a0;border-bottom:1px solid #a0a0a0"></div>
<div class="a" style="left:178px;top:11px;width:229px;height:13px;background:#000080"></div>
<div class="a" style="left:178px;top:24px;width:229px;height:74px;background:#c3c3c3;border-left:1px solid #a8a8a8;border-top:1px solid #a8a8a8"></div>
<svg style="left:182px;top:28px" width="221" height="66"><defs><pattern id="hatch" width="8" height="8" patternUnits="userSpaceOnUse" x="2" y="0"><path d="M-1 1L1 -1M0 8L8 0M7 9L9 7" stroke="#8c8c8c" stroke-width="1"/></pattern></defs><rect width="100%" height="100%" fill="#fff"/><rect width="100%" height="100%" fill="url(#hatch)"/></svg>
<div class="a" style="left:408px;top:10px;width:118px;height:89px;background:#f0f0f0;border-left:1px solid #fff;border-top:1px solid #fff;border-right:1px solid #a0a0a0;border-bottom:1px solid #a0a0a0"></div>
<div class="a" style="left:409px;top:11px;width:116px;height:13px;background:#000080"></div>
<div class="a" style="left:412px;top:27px;width:110px;height:68px;background:#fff;border-left:1px solid #a0a0a0;border-top:1px solid #a0a0a0;border-right:1px solid #e3e3e3;border-bottom:1px solid #e3e3e3"></div>
<div class="a" style="left:112px;top:31px;width:57px;height:15px;overflow:hidden"><div class="t" style="left:0;top:0;letter-spacing:-0.2px;font-weight:bold">Zastrzeżone przez system</div></div>
<div class="a" style="left:112px;top:46px;width:57px;height:15px;overflow:hidden"><div class="t" style="left:0;top:0;letter-spacing:-0.35px;">50 MB NTFS</div></div>
<div class="a" style="left:112px;top:60px;width:57px;height:15px;overflow:hidden"><div class="t" style="left:0;top:0;letter-spacing:-0.2px;">Healthy (System, Active, Primary Partition)</div></div>
<div class="t" style="left:190px;top:31px;letter-spacing:-0.2px;font-weight:bold;background:#fff;padding:0 1px 0 2px;margin-left:-2px">(C:)</div>
<div class="t" style="left:185px;top:46px;letter-spacing:-0.4px;background:#fff">223.01 GB NTFS (BitLocker Encrypted)</div>
<div class="a" style="left:185px;top:60px;width:217px;height:15px;overflow:hidden;background:#fff"><div class="t" style="left:0;top:0;letter-spacing:-0.15px;">Healthy (Boot, Page File, Crash Dump, Primary Partition)</div></div>
<div class="t" style="left:416px;top:46px;letter-spacing:-0.23px">519 MB</div>
<div class="a" style="left:416px;top:60px;width:103px;height:15px;overflow:hidden"><div class="t" style="left:0;top:0;letter-spacing:-0.07px;">Healthy (Recovery Partition)</div></div>
<div class="a" style="left:103px;top:106px;width:1px;height:96px;background:#a0a0a0"></div>
<div class="a" style="left:104px;top:105px;width:474px;height:1px;background:#fff"></div>
<div class="a" style="left:578px;top:105px;width:1px;height:97px;background:#a0a0a0"></div>
<div class="a" style="left:103px;top:201px;width:476px;height:1px;background:#a0a0a0"></div>
<div class="a" style="left:104px;top:109px;width:470px;height:89px;background:#f0f0f0;border-left:1px solid #fff;border-top:1px solid #fff;border-right:1px solid #a0a0a0;border-bottom:1px solid #a0a0a0"></div>
<div class="a" style="left:105px;top:110px;width:468px;height:13px;background:#000080"></div>
<div class="a" style="left:108px;top:126px;width:462px;height:68px;background:#fff;border-left:1px solid #a0a0a0;border-top:1px solid #a0a0a0;border-right:1px solid #e3e3e3;border-bottom:1px solid #e3e3e3"></div>
<div class="t" style="left:118px;top:129px;letter-spacing:-0.2px;font-weight:bold">(D:)</div>
<div class="t" style="left:112px;top:145px;letter-spacing:-0.38px">931.51 GB NTFS (BitLocker Encrypted)</div>
<div class="t" style="left:112px;top:159px">Healthy (Primary Partition)</div>
<div class="a" style="left:103px;top:205px;width:1px;height:96px;background:#a0a0a0"></div>
<div class="a" style="left:104px;top:204px;width:425px;height:1px;background:#fff"></div>
<div class="a" style="left:529px;top:204px;width:1px;height:97px;background:#a0a0a0"></div>
<div class="a" style="left:103px;top:300px;width:427px;height:1px;background:#a0a0a0"></div>
<div class="a" style="left:104px;top:208px;width:73px;height:89px;background:#f0f0f0;border-left:1px solid #fff;border-top:1px solid #fff;border-right:1px solid #a0a0a0;border-bottom:1px solid #a0a0a0"></div>
<div class="a" style="left:105px;top:209px;width:71px;height:13px;background:#000080"></div>
<div class="a" style="left:108px;top:225px;width:65px;height:68px;background:#fff;border-left:1px solid #a0a0a0;border-top:1px solid #a0a0a0;border-right:1px solid #e3e3e3;border-bottom:1px solid #e3e3e3"></div>
<div class="a" style="left:177px;top:208px;width:231px;height:89px;background:#f0f0f0;border-left:1px solid #fff;border-top:1px solid #fff;border-right:1px solid #a0a0a0;border-bottom:1px solid #a0a0a0"></div>
<div class="a" style="left:178px;top:209px;width:229px;height:13px;background:#000080"></div>
<div class="a" style="left:181px;top:225px;width:223px;height:68px;background:#fff;border-left:1px solid #a0a0a0;border-top:1px solid #a0a0a0;border-right:1px solid #e3e3e3;border-bottom:1px solid #e3e3e3"></div>
<div class="a" style="left:408px;top:208px;width:118px;height:89px;background:#f0f0f0;border-left:1px solid #fff;border-top:1px solid #fff;border-right:1px solid #a0a0a0;border-bottom:1px solid #a0a0a0"></div>
<div class="a" style="left:409px;top:209px;width:116px;height:13px;background:#000080"></div>
<div class="a" style="left:412px;top:225px;width:110px;height:68px;background:#fff;border-left:1px solid #a0a0a0;border-top:1px solid #a0a0a0;border-right:1px solid #e3e3e3;border-bottom:1px solid #e3e3e3"></div>
<div class="t" style="left:112px;top:243px;letter-spacing:-0.3px">50 MB</div>
<div class="t" style="left:185px;top:243px;letter-spacing:-0.7px">223.01 GB</div>
<div class="t" style="left:416px;top:243px;letter-spacing:-0.23px">519 MB</div>
<div class="a" style="left:416px;top:258px;width:103px;height:15px;overflow:hidden"><div class="t" style="left:0;top:0;letter-spacing:-0.07px;">Healthy (Recovery Partition)</div></div>
</div>
<div class="a" style="left:773px;top:391px;width:1px;height:271px;background:#fff"></div>
<div class="sb" style="left:774px;top:391px;width:16px;height:271px"></div>
<div class="th" style="left:774px;top:408px;width:15px;height:177px"></div>
<svg style="left:778px;top:397px" width="8" height="6" viewBox="0 0 8 6"><path d="M1 5L4 1.5L7 5" stroke="#606060" stroke-width="1.9" fill="none"/></svg>
<svg style="left:778px;top:651px" width="8" height="6" viewBox="0 0 8 6"><path d="M1 1L4 4.5L7 1" stroke="#606060" stroke-width="1.9" fill="none"/></svg>
<div class="a" style="left:196px;top:662px;width:594px;height:20px;background:#f0f0f0;border-top:1px solid #fff;border-right:1px solid #a0a0a0;border-bottom:1px solid #a0a0a0"></div>
<div class="a" style="left:201px;top:666px;width:11px;height:12px;background:#000"></div>
<div class="t" style="left:217px;top:665px">Unallocated</div>
<div class="a" style="left:286px;top:666px;width:10px;height:12px;background:#000080"></div>
<div class="t" style="left:301px;top:665px">Primary partition</div>

<div class="a" style="left:791px;top:84px;width:1px;height:599px;background:#fff"></div>
<!-- actions panel -->
<div class="a" style="left:795px;top:83px;width:189px;height:600px;border-top:2px solid #6d6d6d;border-left:2px solid #6d6d6d;border-right:1px solid #e3e3e3;border-bottom:1px solid #e3e3e3;background:#fff"></div>
<div class="a" style="left:797px;top:85px;width:186px;height:20px;background:#f0f0f0"></div>
<div class="a" style="left:797px;top:105px;width:186px;height:1px;background:#a0a0a0"></div>
<div class="t" style="left:802px;top:89px;font-weight:bold;letter-spacing:-0.2px">Actions</div>
<div class="a" style="left:797px;top:106px;width:186px;height:26px;border-top:1px solid #eef3f9;background:linear-gradient(#c2d7ee,#9bb8dc)"></div>
<div class="t" style="left:804px;top:113px">Disk Management</div>
<svg style="left:967px;top:117px" width="9" height="5" viewBox="0 0 9 5"><path d="M0 5L4.5 0L9 5Z" fill="#000"/></svg>
<div class="t" style="left:828px;top:137px;letter-spacing:0.1px">More Actions</div>
<svg style="left:970px;top:139px" width="5" height="9" viewBox="0 0 5 9"><path d="M0 0L5 4.5L0 9Z" fill="#000"/></svg>

<!-- status bar -->
<div class="a" style="left:1px;top:684px;width:984px;height:23px;background:#f0f0f0;border-bottom:1px solid #fff"></div>
<div class="a" style="left:764px;top:686px;width:1px;height:20px;background:#d7d7d7"></div>
<div class="a" style="left:897px;top:686px;width:1px;height:20px;background:#d7d7d7"></div>
<div class="a" style="left:982px;top:686px;width:1px;height:20px;background:#d7d7d7"></div>
</body></html>
